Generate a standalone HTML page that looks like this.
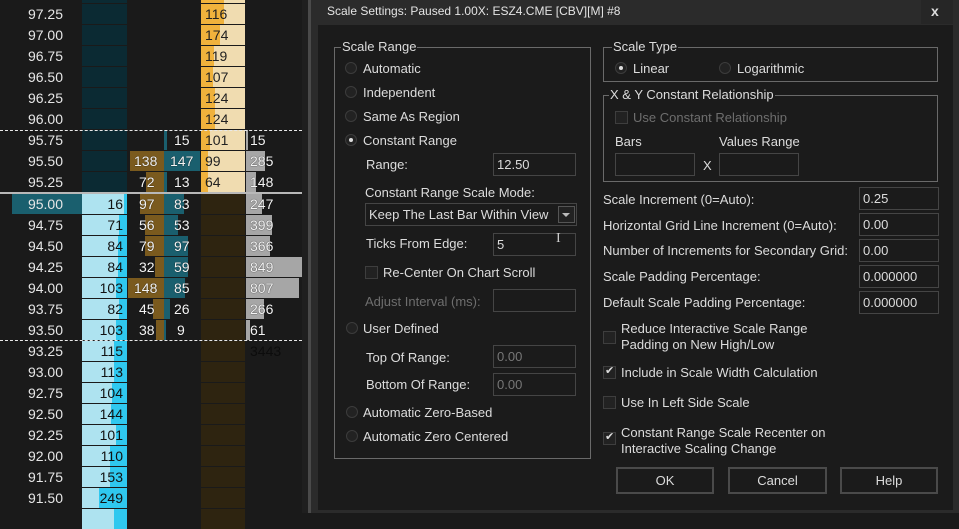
<!DOCTYPE html>
<html><head><meta charset="utf-8"><style>
*{margin:0;padding:0;box-sizing:border-box}
body{width:959px;height:513px;background:#1a1a1a;position:relative;overflow:hidden;font-family:"Liberation Sans",sans-serif}
div,span{position:absolute}
.r{left:0;width:310px;height:20px;font-size:14px;line-height:20px}
.p{left:0;width:63px;text-align:right;color:#e6e6e6;top:0;height:20px}
.c1{left:82px;width:45px;height:20px;top:0}
.c3{left:201px;width:44px;height:20px;top:0}
.t1{left:82px;width:41px;text-align:right;color:#111;top:0}
.bn{height:20px;top:0}
.w{color:#f4f4f4;top:0;text-shadow:0 0 1px #000}
.d{color:#222;top:0;left:205px}
.g{left:246px;height:20px;top:0;background:#a6a6a6}
.hl{height:2px;left:0;width:302px}
.dash{height:0;left:0;width:302px;border-top:1.5px dashed #e8e8e8}
/* dialog */
.tx{color:#dcdcdc;font-size:13px;line-height:15px;white-space:nowrap}
.dis{color:#6e6e6e}
.box{border:1px solid #454545;background:#1b1b1b;height:23px;width:83px}
.box span{left:3px;top:3px;font-size:13px;color:#dcdcdc}
.grp{border:1px solid #6a6a6a}
.gl{background:#1b1b1b;padding:0 1px;font-size:13px;color:#dcdcdc;line-height:15px;top:-9px}
.rad{width:12px;height:12px;border-radius:50%;border:1px solid #3c3c3c;background:#222}
.rad.on::after{content:"";position:absolute;left:3px;top:3px;width:4px;height:4px;border-radius:50%;background:#ddd}
.cb{width:13px;height:13px;border:1px solid #3e3e3e;background:#222}
.btn{border:2px solid #4a4a4a;background:#1b1b1b;height:27px;width:98px;color:#dcdcdc;font-size:13px;text-align:center;line-height:23px}
</style></head><body>

<!-- chart columns background -->
<div style="left:302px;top:0;width:6px;height:513px;background:#1f1f1f"></div>
<div style="left:308px;top:0;width:3px;height:513px;background:#4a4a4a"></div>

<!-- row -1 -->
<div class="r" style="top:-17px"><div class="c1" style="background:#0b2a33"></div><div class="c3" style="background:#f0dcb0"></div><div class="c3" style="background:#f0b23c;width:23px"></div></div>

<div class="r" style="top:4px"><span class="p">97.25</span><div class="c1" style="background:#0b2a33"></div><div class="c3" style="background:#f0dcb0"></div><div class="c3" style="background:#f0b23c;width:23px"></div><span class="d">116</span></div>
<div class="r" style="top:25px"><span class="p">97.00</span><div class="c1" style="background:#0b2a33"></div><div class="c3" style="background:#f0dcb0"></div><div class="c3" style="background:#f0b23c;width:19px"></div><span class="d">174</span></div>
<div class="r" style="top:46px"><span class="p">96.75</span><div class="c1" style="background:#0b2a33"></div><div class="c3" style="background:#f0dcb0"></div><div class="c3" style="background:#f0b23c;width:13px"></div><span class="d">119</span></div>
<div class="r" style="top:67px"><span class="p">96.50</span><div class="c1" style="background:#0b2a33"></div><div class="c3" style="background:#f0dcb0"></div><div class="c3" style="background:#f0b23c;width:12px"></div><span class="d">107</span></div>
<div class="r" style="top:88px"><span class="p">96.25</span><div class="c1" style="background:#0b2a33"></div><div class="c3" style="background:#f0dcb0"></div><div class="c3" style="background:#f0b23c;width:14px"></div><span class="d">124</span></div>
<div class="r" style="top:109px"><span class="p">96.00</span><div class="c1" style="background:#0b2a33"></div><div class="c3" style="background:#f0dcb0"></div><div class="c3" style="background:#f0b23c;width:14px"></div><span class="d">124</span></div>
<div class="r" style="top:130px"><span class="p">95.75</span><div class="c1" style="background:#0b2a33"></div><div class="bn" style="left:164px;width:3px;background:#1a5f6e"></div><span class="w" style="left:174px">15</span><div class="c3" style="background:#f0dcb0"></div><div class="c3" style="background:#f0b23c;width:9px"></div><span class="d">101</span><div class="g" style="width:2px"></div><span class="w" style="left:250px">15</span></div>
<div class="r" style="top:151px"><span class="p">95.50</span><div class="c1" style="background:#0b2a33"></div><div class="bn" style="left:130px;width:34px;background:#7a5a1e"></div><div class="bn" style="left:164px;width:36px;background:#1a5f6e"></div><span class="w" style="left:134px">138</span><span class="w" style="left:170px">147</span><div class="c3" style="background:#f0dcb0"></div><div class="c3" style="background:#f0b23c;width:7px"></div><span class="d">99</span><div class="g" style="width:19px"></div><span class="w" style="left:250px">285</span></div>
<div class="r" style="top:172px"><span class="p">95.25</span><div class="c1" style="background:#0b2a33"></div><div class="bn" style="left:146px;width:18px;background:#7a5a1e"></div><div class="bn" style="left:164px;width:3px;background:#1a5f6e"></div><span class="w" style="left:139px">72</span><span class="w" style="left:174px">13</span><div class="c3" style="background:#f0dcb0"></div><div class="c3" style="background:#f0b23c;width:7px"></div><span class="d">64</span><div class="g" style="width:10px"></div><span class="w" style="left:250px">148</span></div>

<div class="hl" style="top:192px;background:#b8b8b8"></div>

<div class="r" style="top:194px"><div style="left:12px;width:70px;height:20px;background:#1a5f6e"></div><span class="p">95.00</span><div class="c1" style="background:#aee3f0"></div><div class="c1" style="left:124px;width:3px;background:#2fc8ef"></div><span class="t1">16</span><div class="bn" style="left:140px;width:24px;background:#7a5a1e"></div><div class="bn" style="left:164px;width:20px;background:#1a5f6e"></div><span class="w" style="left:139px">97</span><span class="w" style="left:174px">83</span><div class="c3" style="background:#2e2410"></div><div class="g" style="width:16px"></div><span class="w" style="left:250px">247</span></div>
<div class="r" style="top:215px"><span class="p">94.75</span><div class="c1" style="background:#aee3f0"></div><div class="c1" style="left:119px;width:8px;background:#2fc8ef"></div><span class="t1">71</span><div class="bn" style="left:145px;width:19px;background:#7a5a1e"></div><div class="bn" style="left:164px;width:14px;background:#1a5f6e"></div><span class="w" style="left:139px">56</span><span class="w" style="left:174px">53</span><div class="c3" style="background:#2e2410"></div><div class="g" style="width:26px"></div><span class="w" style="left:250px">399</span></div>
<div class="r" style="top:236px"><span class="p">94.50</span><div class="c1" style="background:#aee3f0"></div><div class="c1" style="left:118px;width:9px;background:#2fc8ef"></div><span class="t1">84</span><div class="bn" style="left:145px;width:19px;background:#7a5a1e"></div><div class="bn" style="left:164px;width:24px;background:#1a5f6e"></div><span class="w" style="left:139px">79</span><span class="w" style="left:174px">97</span><div class="c3" style="background:#2e2410"></div><div class="g" style="width:24px"></div><span class="w" style="left:250px">366</span></div>
<div class="r" style="top:257px"><span class="p">94.25</span><div class="c1" style="background:#aee3f0"></div><div class="c1" style="left:118px;width:9px;background:#2fc8ef"></div><span class="t1">84</span><div class="bn" style="left:155px;width:9px;background:#7a5a1e"></div><div class="bn" style="left:164px;width:24px;background:#1a5f6e"></div><span class="w" style="left:139px">32</span><span class="w" style="left:174px">59</span><div class="c3" style="background:#2e2410"></div><div class="g" style="width:56px"></div><span class="w" style="left:250px">849</span></div>
<div class="r" style="top:278px"><span class="p">94.00</span><div class="c1" style="background:#aee3f0"></div><div class="c1" style="left:116px;width:11px;background:#2fc8ef"></div><span class="t1">103</span><div class="bn" style="left:128px;width:36px;background:#7a5a1e"></div><div class="bn" style="left:164px;width:21px;background:#1a5f6e"></div><span class="w" style="left:134px">148</span><span class="w" style="left:174px">85</span><div class="c3" style="background:#2e2410"></div><div class="g" style="width:53px"></div><span class="w" style="left:250px">807</span></div>
<div class="r" style="top:299px"><span class="p">93.75</span><div class="c1" style="background:#aee3f0"></div><div class="c1" style="left:119px;width:8px;background:#2fc8ef"></div><span class="t1">82</span><div class="bn" style="left:153px;width:11px;background:#7a5a1e"></div><div class="bn" style="left:164px;width:6px;background:#1a5f6e"></div><span class="w" style="left:139px">45</span><span class="w" style="left:174px">26</span><div class="c3" style="background:#2e2410"></div><div class="g" style="width:18px"></div><span class="w" style="left:250px">266</span></div>
<div class="r" style="top:320px"><span class="p">93.50</span><div class="c1" style="background:#aee3f0"></div><div class="c1" style="left:116px;width:11px;background:#2fc8ef"></div><span class="t1">103</span><div class="bn" style="left:156px;width:8px;background:#7a5a1e"></div><div class="bn" style="left:164px;width:2px;background:#1a5f6e"></div><span class="w" style="left:139px">38</span><span class="w" style="left:177px">9</span><div class="c3" style="background:#2e2410"></div><div class="g" style="width:4px"></div><span class="w" style="left:250px">61</span></div>
<div class="r" style="top:341px"><span class="p">93.25</span><div class="c1" style="background:#aee3f0"></div><div class="c1" style="left:114px;width:13px;background:#2fc8ef"></div><span class="t1">115</span><div class="c3" style="background:#2e2410"></div><span style="left:250px;color:#0c0c0c;top:0">3443</span></div>
<div class="r" style="top:362px"><span class="p">93.00</span><div class="c1" style="background:#aee3f0"></div><div class="c1" style="left:114px;width:13px;background:#2fc8ef"></div><span class="t1">113</span><div class="c3" style="background:#2e2410"></div></div>
<div class="r" style="top:383px"><span class="p">92.75</span><div class="c1" style="background:#aee3f0"></div><div class="c1" style="left:112px;width:15px;background:#2fc8ef"></div><span class="t1">104</span><div class="c3" style="background:#2e2410"></div></div>
<div class="r" style="top:404px"><span class="p">92.50</span><div class="c1" style="background:#aee3f0"></div><div class="c1" style="left:111px;width:16px;background:#2fc8ef"></div><span class="t1">144</span><div class="c3" style="background:#2e2410"></div></div>
<div class="r" style="top:425px"><span class="p">92.25</span><div class="c1" style="background:#aee3f0"></div><div class="c1" style="left:116px;width:11px;background:#2fc8ef"></div><span class="t1">101</span><div class="c3" style="background:#2e2410"></div></div>
<div class="r" style="top:446px"><span class="p">92.00</span><div class="c1" style="background:#aee3f0"></div><div class="c1" style="left:110px;width:17px;background:#2fc8ef"></div><span class="t1">110</span><div class="c3" style="background:#2e2410"></div></div>
<div class="r" style="top:467px"><span class="p">91.75</span><div class="c1" style="background:#aee3f0"></div><div class="c1" style="left:110px;width:17px;background:#2fc8ef"></div><span class="t1">153</span><div class="c3" style="background:#2e2410"></div></div>
<div class="r" style="top:488px"><span class="p">91.50</span><div class="c1" style="background:#aee3f0"></div><div class="c1" style="left:99px;width:28px;background:#2fc8ef"></div><span class="t1">249</span><div class="c3" style="background:#2e2410"></div></div>
<div class="r" style="top:509px"><div class="c1" style="background:#aee3f0"></div><div class="c1" style="left:114px;width:13px;background:#2fc8ef"></div><div class="c3" style="background:#2e2410"></div></div>

<div class="dash" style="top:130px"></div>
<div class="dash" style="top:340px"></div>

<!-- DIALOG -->
<div style="left:311px;top:0;width:648px;height:513px;background:#2b2b2b"></div>
<div style="left:318px;top:25px;width:635px;height:485px;background:#1b1b1b"></div>
<span style="left:327px;top:4px;font-size:12px;color:#e4e4e4;line-height:15px">Scale Settings: Paused 1.00X: ESZ4.CME [CBV][M] #8</span>
<div style="left:921px;top:0;width:32px;height:24px;background:#262626"></div>
<span style="left:931px;top:3px;font-size:14px;font-weight:bold;color:#ddd">x</span>

<!-- Scale Range group -->
<div class="grp" style="left:334px;top:47px;width:257px;height:412px"><span class="gl" style="left:6px">Scale Range</span></div>
<div class="rad" style="left:345px;top:62px"></div><span class="tx" style="left:363px;top:61px">Automatic</span>
<div class="rad" style="left:345px;top:86px"></div><span class="tx" style="left:363px;top:85px">Independent</span>
<div class="rad" style="left:345px;top:110px"></div><span class="tx" style="left:363px;top:109px">Same As Region</span>
<div class="rad on" style="left:345px;top:134px"></div><span class="tx" style="left:363px;top:133px">Constant Range</span>
<span class="tx" style="left:366px;top:157px">Range:</span>
<div class="box" style="left:493px;top:153px"><span>12.50</span></div>
<span class="tx" style="left:365px;top:185px">Constant Range Scale Mode:</span>
<div class="box" style="left:365px;top:203px;width:212px"><span style="left:3px">Keep The Last Bar Within View</span><div style="left:192px;top:2px;width:17px;height:17px;border:1px solid #555;background:#222"></div><div style="left:196px;top:9px;width:0;height:0;border-left:4px solid transparent;border-right:4px solid transparent;border-top:4px solid #bbb"></div></div>
<span class="tx" style="left:366px;top:236px">Ticks From Edge:</span>
<div class="box" style="left:493px;top:233px"><span>5</span></div>
<span style="left:556px;top:231px;color:#ccc;font-size:14px;font-family:'Liberation Serif',serif">I</span>
<div class="cb" style="left:365px;top:266px"></div><span class="tx" style="left:383px;top:265px">Re-Center On Chart Scroll</span>
<span class="tx dis" style="left:365px;top:294px">Adjust Interval (ms):</span>
<div class="box" style="left:493px;top:289px"></div>
<div class="rad" style="left:346px;top:322px"></div><span class="tx" style="left:363px;top:321px">User Defined</span>
<span class="tx" style="left:366px;top:350px">Top Of Range:</span>
<div class="box" style="left:493px;top:345px"><span style="color:#777">0.00</span></div>
<span class="tx" style="left:366px;top:377px">Bottom Of Range:</span>
<div class="box" style="left:493px;top:373px"><span style="color:#777">0.00</span></div>
<div class="rad" style="left:346px;top:406px"></div><span class="tx" style="left:363px;top:405px">Automatic Zero-Based</span>
<div class="rad" style="left:346px;top:430px"></div><span class="tx" style="left:363px;top:429px">Automatic Zero Centered</span>

<!-- Scale Type -->
<div class="grp" style="left:603px;top:47px;width:335px;height:35px"><span class="gl" style="left:8px">Scale Type</span></div>
<div class="rad on" style="left:615px;top:62px"></div><span class="tx" style="left:633px;top:61px">Linear</span>
<div class="rad" style="left:719px;top:62px"></div><span class="tx" style="left:737px;top:61px">Logarithmic</span>

<div class="grp" style="left:603px;top:95px;width:335px;height:87px"><span class="gl" style="left:5px">X &amp; Y Constant Relationship</span></div>
<div class="cb" style="left:615px;top:111px"></div><span class="tx dis" style="left:633px;top:110px">Use Constant Relationship</span>
<span class="tx" style="left:615px;top:134px">Bars</span><span class="tx" style="left:719px;top:134px">Values Range</span>
<div class="box" style="left:615px;top:153px;width:80px"></div>
<span class="tx" style="left:703px;top:158px">X</span>
<div class="box" style="left:719px;top:153px;width:80px"></div>

<span class="tx" style="left:603px;top:192px">Scale Increment (0=Auto):</span>
<div class="box" style="left:859px;top:187px;width:80px"><span>0.25</span></div>
<span class="tx" style="left:603px;top:218px">Horizontal Grid Line Increment (0=Auto):</span>
<div class="box" style="left:859px;top:213px;width:80px"><span>0.00</span></div>
<span class="tx" style="left:603px;top:243px">Number of Increments for Secondary Grid:</span>
<div class="box" style="left:859px;top:239px;width:80px"><span>0.00</span></div>
<span class="tx" style="left:603px;top:269px">Scale Padding Percentage:</span>
<div class="box" style="left:859px;top:265px;width:80px"><span>0.000000</span></div>
<span class="tx" style="left:603px;top:295px">Default Scale Padding Percentage:</span>
<div class="box" style="left:859px;top:291px;width:80px"><span>0.000000</span></div>

<div class="cb" style="left:603px;top:331px"></div>
<span class="tx" style="left:621px;top:321px">Reduce Interactive Scale Range</span>
<span class="tx" style="left:621px;top:337px">Padding on New High/Low</span>
<div class="cb" style="left:603px;top:366px"></div><span style="left:605px;top:364px;font-size:11px;color:#ddd">✔</span>
<span class="tx" style="left:621px;top:365px">Include in Scale Width Calculation</span>
<div class="cb" style="left:603px;top:396px"></div>
<span class="tx" style="left:621px;top:395px">Use In Left Side Scale</span>
<div class="cb" style="left:603px;top:432px"></div><span style="left:605px;top:430px;font-size:11px;color:#ddd">✔</span>
<span class="tx" style="left:621px;top:425px">Constant Range Scale Recenter on</span>
<span class="tx" style="left:621px;top:441px">Interactive Scaling Change</span>

<div class="btn" style="left:616px;top:467px">OK</div>
<div class="btn" style="left:728px;top:467px;width:99px">Cancel</div>
<div class="btn" style="left:840px;top:467px">Help</div>
</body></html>
